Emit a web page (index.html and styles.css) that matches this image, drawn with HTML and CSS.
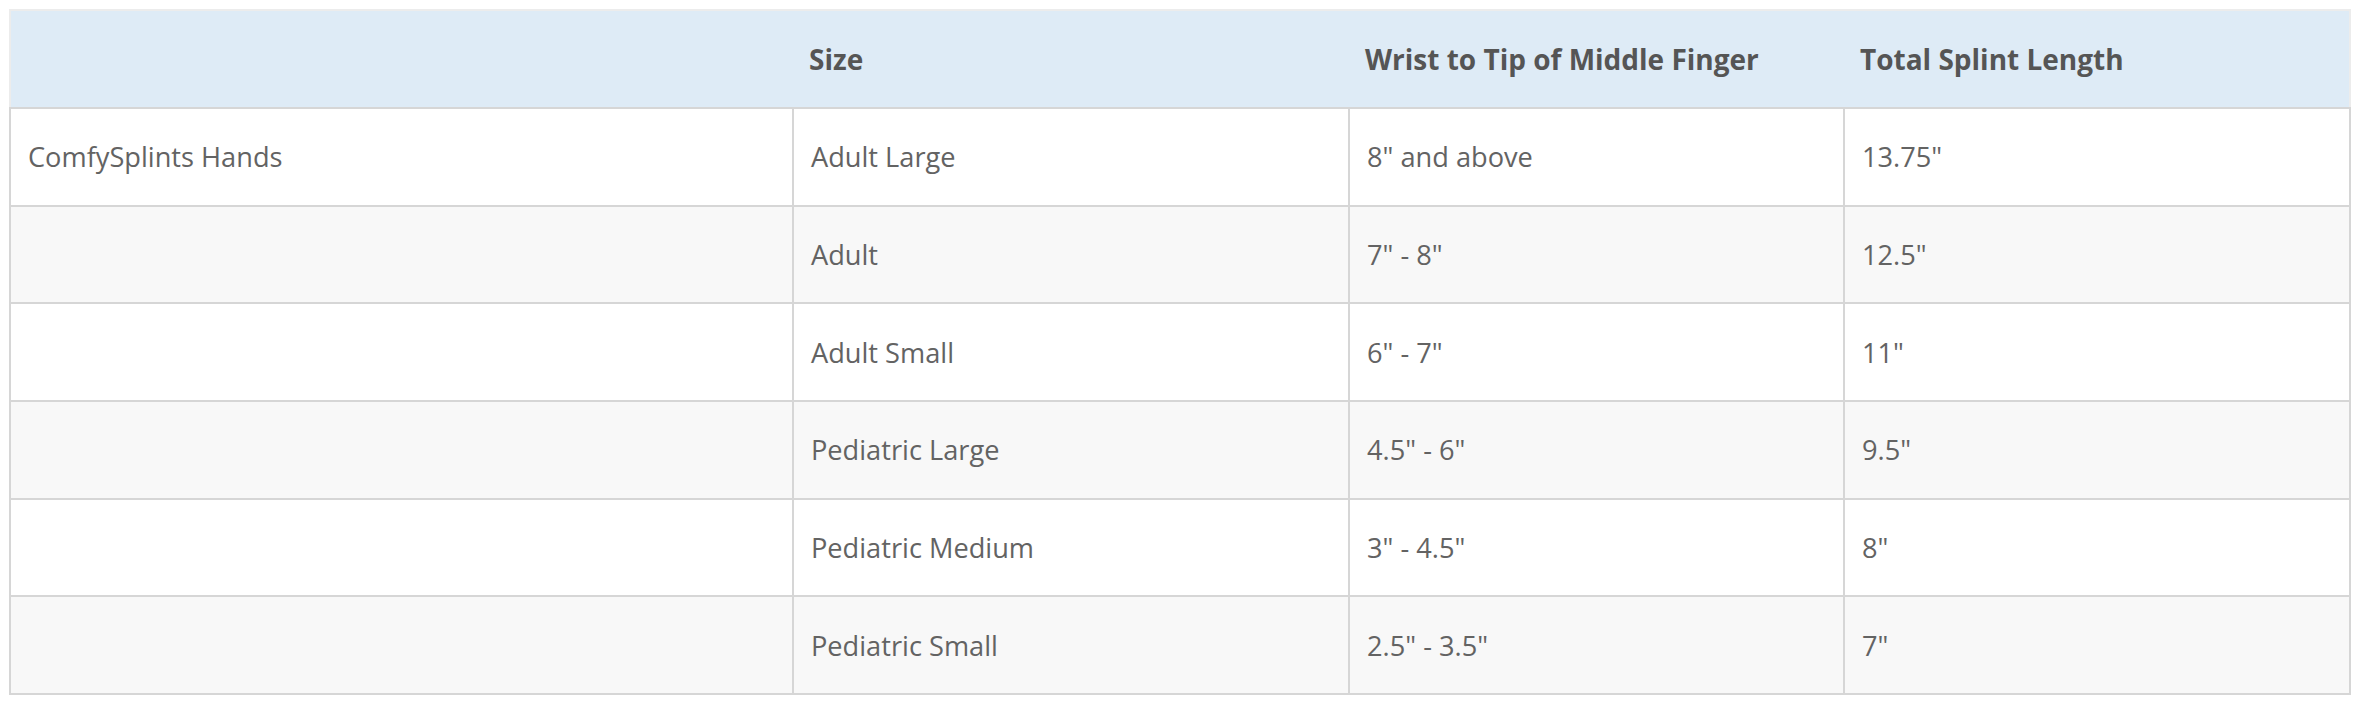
FILE: index.html
```html
<!DOCTYPE html>
<html>
<head>
<meta charset="utf-8">
<link rel="stylesheet" href="styles.css">
</head>
<body>
<div class="wrap">
  <table class="size-table">
    <colgroup>
      <col class="c1">
      <col class="c2">
      <col class="c3">
      <col class="c4">
    </colgroup>
    <thead>
      <tr>
        <th></th>
        <th>Size</th>
        <th>Wrist to Tip of Middle Finger</th>
        <th>Total Splint Length</th>
      </tr>
    </thead>
    <tbody>
      <tr><td>ComfySplints Hands</td><td>Adult Large</td><td>8" and above</td><td>13.75"</td></tr>
      <tr><td></td><td>Adult</td><td>7" - 8"</td><td>12.5"</td></tr>
      <tr><td></td><td>Adult Small</td><td>6" - 7"</td><td>11"</td></tr>
      <tr><td></td><td>Pediatric Large</td><td>4.5" - 6"</td><td>9.5"</td></tr>
      <tr><td></td><td>Pediatric Medium</td><td>3" - 4.5"</td><td>8"</td></tr>
      <tr><td></td><td>Pediatric Small</td><td>2.5" - 3.5"</td><td>7"</td></tr>
    </tbody>
  </table>
</div>
</body>
</html>
```
FILE: styles.css
```css
html, body {
  margin: 0;
  padding: 0;
  background: #ffffff;
}
.wrap {
  padding: 9px 9px 0 9px;
}
.size-table {
  border-collapse: collapse;
  table-layout: fixed;
  width: 2340px;
  font-family: "Open Sans", "Liberation Sans", sans-serif;
  font-size: 28px;
  color: #5a5a5a;
}
.c1 { width: 783px; }
.c2 { width: 556px; }
.c3 { width: 495px; }
.c4 { width: 506px; }
.size-table thead tr {
  height: 98px;
}
.size-table tbody tr {
  height: 97.7px;
}
.size-table th {
  background: #deebf6;
  font-weight: 700;
  color: #555555;
  text-align: left;
  padding: 0 16px;
  border-top: 2px solid #ececec;
  border-bottom: 2px solid #d6d6d6;
  border-left: none;
  border-right: none;
}
.size-table th:first-child {
  border-left: 2px solid #ececec;
}
.size-table th:last-child {
  border-right: 2px solid #ececec;
}
.size-table td {
  font-weight: 400;
  font-size: 27.2px;
  color: #636363;
  padding: 0 17px;
  border: 2px solid #d6d6d6;
  vertical-align: middle;
}
.size-table tbody tr:nth-child(even) td {
  background: #f8f8f8;
}
```
